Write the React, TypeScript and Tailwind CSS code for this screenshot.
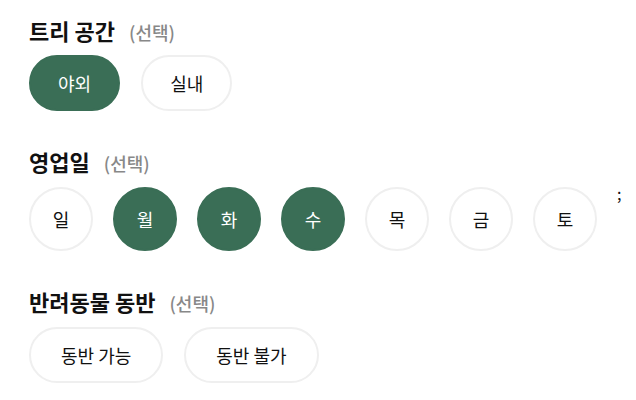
import { useState } from "react";

const font = { fontFamily: '"Noto Sans CJK KR", "Noto Sans", sans-serif' };

function SectionTitle({ title }: { title: string }) {
  return (
    <h3 className="flex items-baseline gap-[14px] h-7 leading-7">
      <span className="text-[22px] font-bold text-[#111]">{title}</span>
      <span className="text-[18px] font-medium text-[#888]">(선택)</span>
    </h3>
  );
}

function Pill({ label, active, wide }: { label: string; active: boolean; wide?: boolean }) {
  return (
    <button
      type="button"
      className={`h-14 rounded-full text-[18px] flex items-center justify-center ${
        wide ? "px-[30px]" : "px-[27px]"
      } ${
        active
          ? "bg-[#3a6e56] text-white border-2 border-[#3a6e56]"
          : "bg-white text-[#111] border-2 border-[#efefef]"
      }`}
    >
      {label}
    </button>
  );
}

export default function App() {
  const [space] = useState("야외");
  const [days] = useState(["월", "화", "수"]);
  const allDays = ["일", "월", "화", "수", "목", "금", "토"];

  return (
    <div className="w-[636px] h-[400px] bg-white px-[29px] pt-4" style={font}>
      {/* 트리 공간 */}
      <section>
        <SectionTitle title="트리 공간" />
        <div className="flex gap-[21px] mt-[11px]">
          {["야외", "실내"].map((s) => (
            <Pill key={s} label={s} active={s === space} />
          ))}
        </div>
      </section>

      {/* 영업일 */}
      <section className="mt-9">
        <SectionTitle title="영업일" />
        <div className="flex gap-5 mt-[12px]">
          {allDays.map((d) => {
            const on = days.includes(d);
            return (
              <button
                key={d}
                type="button"
                className={`w-16 h-16 rounded-full flex items-center justify-center text-[18px] shrink-0 ${
                  on
                    ? "bg-[#3a6e56] text-white border-2 border-[#3a6e56]"
                    : "bg-white text-[#111] border-2 border-[#efefef]"
                }`}
              >
                {d}
              </button>
            );
          })}
          <span className="self-start text-[16px] leading-[12px] text-[#111]">;</span>
        </div>
      </section>

      {/* 반려동물 동반 */}
      <section className="mt-9">
        <SectionTitle title="반려동물 동반" />
        <div className="flex gap-[21px] mt-3">
          <Pill label="동반 가능" active={false} wide />
          <Pill label="동반 불가" active={false} wide />
        </div>
      </section>
    </div>
  );
}
